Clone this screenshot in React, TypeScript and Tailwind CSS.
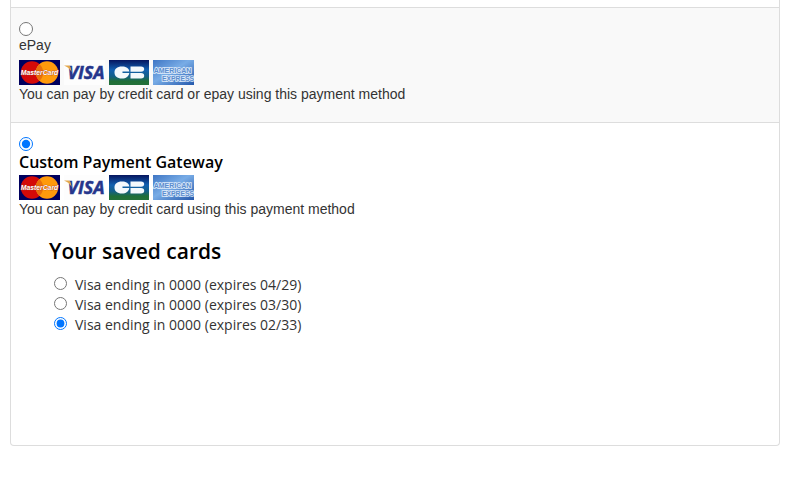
import React, { useState } from 'react';

const savedCards = [
  { id: 'card-1', label: 'Visa ending in 0000 (expires 04/29)' },
  { id: 'card-2', label: 'Visa ending in 0000 (expires 03/30)' },
  { id: 'card-3', label: 'Visa ending in 0000 (expires 02/33)' },
];

const CardLogos: React.FC = () => (
  <div className="flex gap-1">
    <svg width="41" height="25" viewBox="0 0 41 25" role="img" aria-label="MasterCard">
      <rect width="41" height="25" fill="#00005e" />
      <circle cx="13" cy="12.5" r="11.2" fill="#d40a08" />
      <circle cx="28" cy="12.5" r="11.2" fill="#ff9a0c" />
      <path d="M20.5 4.2a11.2 11.2 0 0 1 0 16.600a11.200 11.200 0 0 1 0-16.600" fill="#e8700c" />
      <text x="20.5" y="15" textAnchor="middle" fontFamily="Liberation Sans, sans-serif" fontStyle="italic" fontWeight="bold" fontSize="6.8" fill="#fff" stroke="#b03a20" strokeWidth="0.6" paintOrder="stroke">MasterCard</text>
    </svg>
    <svg width="41" height="25" viewBox="0 0 41 25" role="img" aria-label="Visa">
      <rect width="41" height="25" fill="#fdfdfd" />
      <text x="22" y="19" textAnchor="middle" fontFamily="Open Sans, sans-serif" fontStyle="italic" fontWeight="bold" fontSize="18" fill="#25368c" stroke="#25368c" strokeWidth="0.5">VISA</text>
      <path d="M0 5.5h4.5q1.5 0 2 1.5l1.200 5C6 9 3.500 6.800 0 5.500z" fill="#e3a84c" />
    </svg>
    <svg width="40" height="25" viewBox="0 0 40 25" role="img" aria-label="CB">
      <defs>
        <linearGradient id="cbFill" x1="0" y1="0" x2="0" y2="1">
          <stop offset="0" stopColor="#06155f" />
          <stop offset="0.4" stopColor="#1260b0" />
          <stop offset="0.65" stopColor="#145f88" />
          <stop offset="0.85" stopColor="#1f6e37" />
          <stop offset="1" stopColor="#23703a" />
        </linearGradient>
      </defs>
      <rect width="40" height="25" fill="url(#cbFill)" />
      <path d="M13 6.500c4 0 7 1.800 7.300 5H13.500v1.500h6.800c-.5 3.500-3.300 5.500-7.300 5.500c-5 0-7.500-2.500-7.500-6s2.500-6 7.500-6z" fill="#f4f8fc" />
      <path d="M21.500 6.500h10.500q3.200 0 3.200 2.500t-3.200 2.700H21.500zM21.500 13h10.500q3.200 0 3.200 2.700t-3.200 2.800H21.500z" fill="#f4f8fc" />
    </svg>
    <svg width="41" height="25" viewBox="0 0 41 25" role="img" aria-label="American Express">
      <defs>
        <linearGradient id="amexFill" x1="0" y1="0" x2="1" y2="1">
          <stop offset="0" stopColor="#3f76c4" />
          <stop offset="0.45" stopColor="#78ace6" />
          <stop offset="1" stopColor="#2458ac" />
        </linearGradient>
      </defs>
      <rect width="41" height="25" fill="url(#amexFill)" />
      <text x="19.5" y="12.5" textAnchor="middle" fontFamily="Liberation Sans, sans-serif" fontWeight="bold" fontSize="7" fill="#5b8dce" stroke="#dceafa" strokeWidth="1.6" paintOrder="stroke">AMERICAN</text>
      <text x="41" y="20.5" textAnchor="end" fontFamily="Liberation Sans, sans-serif" fontWeight="bold" fontSize="6.8" fill="#5b8dce" stroke="#dceafa" strokeWidth="1.6" paintOrder="stroke">EXPRESS</text>
    </svg>
  </div>
);

const App: React.FC = () => {
  const [method, setMethod] = useState('custom');
  const [card, setCard] = useState('card-3');

  return (
    <main className="px-[10px] pb-12 mr-1 bg-white text-[#333] font-['Liberation_Sans',Arial,sans-serif] text-sm">
      <form className="border border-t-0 border-[#ddd] rounded-b">
        <div className="h-2 border-b border-[#ddd]" />

        <section className="px-2 pt-[14px] pb-[19px] bg-[#f9f9f9] border-b border-[#ddd]">
          <input
            id="epay"
            type="radio"
            name="method"
            className="block size-[14px] accent-[#0075ff]"
            checked={method === 'epay'}
            onChange={() => setMethod('epay')}
          />
          <label htmlFor="epay" className="block h-6 leading-[18px]">ePay</label>
          <CardLogos />
          <p className="leading-[18px]">You can pay by credit card or epay using this payment method</p>
        </section>

        <section className="px-2 pt-[14px] pb-[110px]">
          <input
            id="custom"
            type="radio"
            name="method"
            className="block size-[14px] accent-[#0075ff]"
            checked={method === 'custom'}
            onChange={() => setMethod('custom')}
          />
          <label htmlFor="custom" className="block h-6 leading-[22px] text-base font-semibold text-black font-['Open_Sans',sans-serif]">
            Custom Payment Gateway
          </label>
          <CardLogos />
          <p className="leading-[18px]">You can pay by credit card using this payment method</p>

          <fieldset className="mt-5 pl-[30px] font-['Open_Sans',sans-serif]">
            <legend className="mb-[11px] text-[21px] leading-[26px] font-semibold text-black">Your saved cards</legend>
            {savedCards.map(({ id, label }) => (
              <div key={id} className="flex items-center h-5 pl-[5px]">
                <input
                  id={id}
                  type="radio"
                  name="card"
                  className="size-[13px] mb-[3px] mr-2 accent-[#0075ff]"
                  checked={card === id}
                  onChange={() => setCard(id)}
                />
                <label htmlFor={id}>{label}</label>
              </div>
            ))}
          </fieldset>
        </section>
      </form>
    </main>
  );
};

export default App;
